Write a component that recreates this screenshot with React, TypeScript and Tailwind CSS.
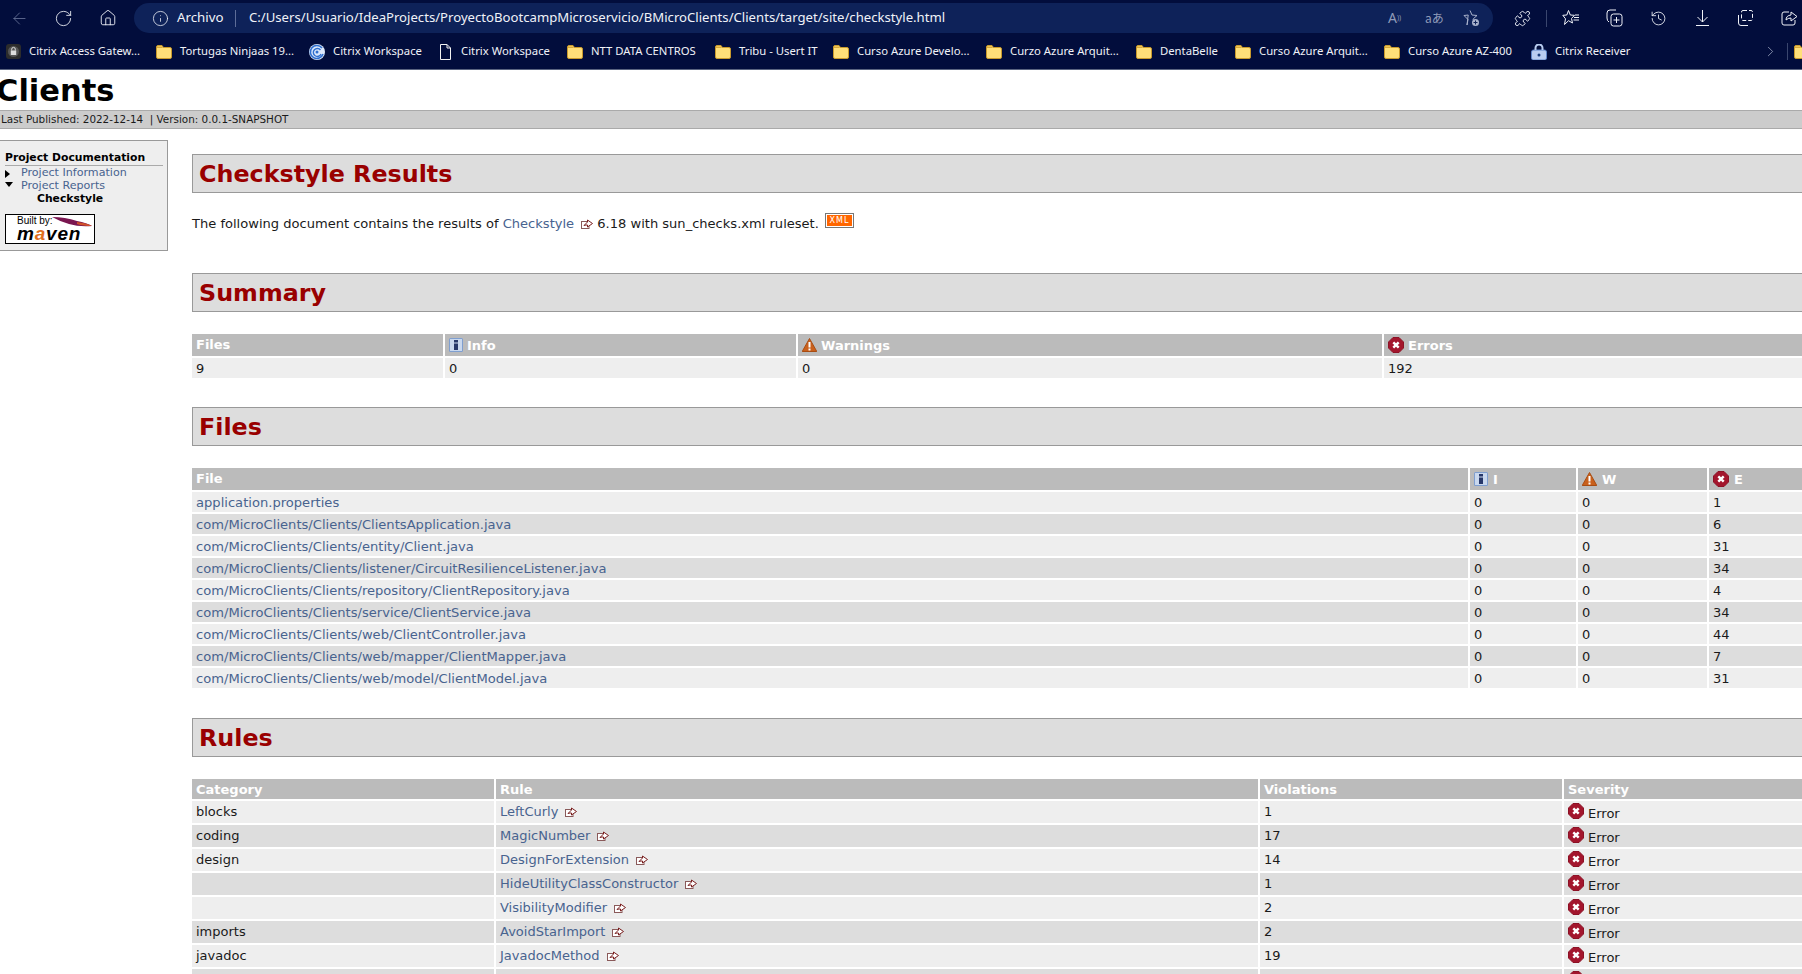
import { ArrowLeft, ChevronRight, History, House, Info, Puzzle, RotateCw } from "lucide-react";
import type { ReactNode } from "react";

const bookmarks = [
  { label: "Citrix Access Gatew...", icon: "lock", width: "w-[150px]" },
  { label: "Tortugas Ninjaas 19...", icon: "folder", width: "w-[153px]" },
  { label: "Citrix Workspace", icon: "swirl", width: "w-[129px]" },
  { label: "Citrix Workspace", icon: "file", width: "w-[129px]" },
  { label: "NTT DATA CENTROS", icon: "folder", width: "w-[148px]" },
  { label: "Tribu - Usert IT", icon: "folder", width: "w-[118px]" },
  { label: "Curso Azure Develo...", icon: "folder", width: "w-[153px]" },
  { label: "Curzo Azure Arquit...", icon: "folder", width: "w-[150px]" },
  { label: "DentaBelle", icon: "folder", width: "w-[99px]" },
  { label: "Curso Azure Arquit...", icon: "folder", width: "w-[149px]" },
  { label: "Curso Azure AZ-400", icon: "folder", width: "w-[147px]" },
  { label: "Citrix Receiver", icon: "receiver", width: "w-[130px]" },
];

const files = [
  ["application.properties", "1"],
  ["com/MicroClients/Clients/ClientsApplication.java", "6"],
  ["com/MicroClients/Clients/entity/Client.java", "31"],
  ["com/MicroClients/Clients/listener/CircuitResilienceListener.java", "34"],
  ["com/MicroClients/Clients/repository/ClientRepository.java", "4"],
  ["com/MicroClients/Clients/service/ClientService.java", "34"],
  ["com/MicroClients/Clients/web/ClientController.java", "44"],
  ["com/MicroClients/Clients/web/mapper/ClientMapper.java", "7"],
  ["com/MicroClients/Clients/web/model/ClientModel.java", "31"],
];

const rules = [
  ["blocks", "LeftCurly", "1"],
  ["coding", "MagicNumber", "17"],
  ["design", "DesignForExtension", "14"],
  ["", "HideUtilityClassConstructor", "1"],
  ["", "VisibilityModifier", "2"],
  ["imports", "AvoidStarImport", "2"],
  ["javadoc", "JavadocMethod", "19"],
  ["", "", ""],
];

function Folder() {
  return (
    <svg width="16" height="14" viewBox="0 0 16 14" className="shrink-0">
      <path d="M0.5 2 Q0.5 0.5 2 0.5 H6 L7.5 2.5 H14 Q15.5 2.5 15.5 4 V12 Q15.5 13.5 14 13.5 H2 Q0.5 13.5 0.5 12 Z" fill="#ffdf79" stroke="#c99a2c" />
      <path d="M1 1.5 H6 L7 3 H1 Z" fill="#d9a93a" />
    </svg>
  );
}

function BookmarkIcon({ type }: { type: string }) {
  if (type === "folder") return <Folder />;
  if (type === "lock")
    return (
      <svg width="15" height="15" viewBox="0 0 15 15" className="shrink-0">
        <rect width="15" height="15" rx="3" fill="#2c2c2c" />
        <circle cx="7.5" cy="7.5" r="5.5" fill="#555" />
        <rect x="4.8" y="6.5" width="5.4" height="4.5" fill="#ddd" />
        <path d="M5.7 6.5 V5.2 A1.8 1.8 0 0 1 9.3 5.2 V6.5" fill="none" stroke="#ddd" />
      </svg>
    );
  if (type === "swirl")
    return (
      <svg width="16" height="16" viewBox="0 0 16 16" className="shrink-0">
        <circle cx="8" cy="8" r="8" fill="#dbe8fb" />
        <path d="M13 4 A6.5 6.5 0 1 0 14 10" fill="none" stroke="#2f6fd0" strokeWidth="1.6" />
        <path d="M11.5 6 A4 4 0 1 0 12 10" fill="none" stroke="#2f6fd0" strokeWidth="1.4" />
        <circle cx="8" cy="8" r="1.5" fill="#2f6fd0" />
      </svg>
    );
  if (type === "file")
    return (
      <svg width="13" height="16" viewBox="0 0 13 16" className="shrink-0 ml-[1px] mr-[1px]">
        <path d="M1.5 0.5 H8 L11.5 4 V15.5 H1.5 Z M8 0.5 V4 H11.5" fill="none" stroke="#f2f2f2" />
      </svg>
    );
  return (
    <svg width="16" height="16" viewBox="0 0 16 16" className="shrink-0">
      <rect x="0.5" y="6" width="15" height="10" rx="2" fill="#b9cdf0" stroke="#5f86c8" />
      <path d="M4.5 6 V4 A3.5 3.5 0 0 1 11.5 4 V6" fill="none" stroke="#b9cdf0" strokeWidth="2" />
      <circle cx="8" cy="11" r="1.5" fill="#1c3f7d" />
    </svg>
  );
}

function ErrorIcon() {
  return (
    <svg width="16" height="16" viewBox="0 0 16 16" className="relative -top-[1px] inline-block shrink-0">
      <path d="M5 0.5 H11 L15.5 5 V11 L11 15.5 H5 L0.5 11 V5 Z" fill="#a3162d" stroke="#8c1226" strokeLinejoin="round" />
      <path d="M5.3 5.3 L10.7 10.7 M10.7 5.3 L5.3 10.7" stroke="#fff" strokeWidth="2.4" />
    </svg>
  );
}

function InfoIcon() {
  return (
    <svg width="14" height="14" viewBox="0 0 14 14" className="relative -top-[1px] inline-block shrink-0">
      <rect width="14" height="14" rx="1.5" fill="#7f9fd0" />
      <rect x="1" y="1" width="12" height="12" fill="#c9d8ee" />
      <rect x="5" y="2" width="4" height="10" fill="#27386a" />
      <rect x="5" y="4.5" width="4" height="1" fill="#c9d8ee" />
    </svg>
  );
}

function WarnIcon() {
  return (
    <svg width="15" height="14" viewBox="0 0 15 14" className="relative -top-[1px] inline-block shrink-0">
      <path d="M7.5 0.5 L14.8 13.5 H0.2 Z" fill="#c9601c" stroke="#a84c12" strokeLinejoin="round" />
      <rect x="6.5" y="4" width="2" height="5.5" fill="#fff" />
      <rect x="6.5" y="10.5" width="2" height="2" fill="#fff" />
    </svg>
  );
}

function ExternalLink() {
  return (
    <svg width="12" height="10" viewBox="0 0 12 10" className="inline-block ml-[7px] align-[-1px]">
      <rect x="0.5" y="2.5" width="7.5" height="7" fill="#fff" stroke="#8a5a5a" />
      <path d="M3 6.5 L6.5 3 V1 L11.5 4.5 L6.5 8 V6 H5 Z" fill="#fff" stroke="#7a1f1f" />
    </svg>
  );
}

function Section({ children }: { children: ReactNode }) {
  return (
    <h2 className="ml-[2px] w-[1640px] h-[39px] pl-[6px] pt-[2px] flex items-center bg-[#ddd] border border-[#999] text-[#900] text-[23.8px] font-bold leading-none">
      {children}
    </h2>
  );
}

function FileLink({ children }: { children: ReactNode }) {
  return <a className="text-[#48638f]">{children}</a>;
}

export default function App() {
  return (
    <div className="w-[1802px] h-[974px] overflow-hidden bg-white text-[13px] text-[#1a1a1a] font-['DejaVu_Sans',sans-serif]">
      {/* browser chrome */}
      <div className="h-[70px] bg-[#020d3c] border-b border-[#5a6480] text-[#f0f2f8] font-['Noto_Sans',sans-serif]">
        <div className="h-[36px] flex items-center">
          <ArrowLeft size={19} strokeWidth={1} className="ml-[10px] text-[#6f7a9e]" />
          <RotateCw size={19} strokeWidth={1.1} className="ml-[25px]" />
          <House size={18} strokeWidth={1.2} className="ml-[26px]" />
          <div className="ml-[17px] w-[1359px] h-[30px] rounded-full bg-[#0e2259] flex items-center text-[13.3px]">
            <Info size={17} strokeWidth={1.1} className="ml-[18px]" />
            <span className="ml-[8px] w-[58px]">Archivo</span>
            <span className="w-px h-[17px] bg-[#5e6d98]" />
            <span className="ml-[13px] text-[13.15px] whitespace-nowrap">
              C:/Users/Usuario/IdeaProjects/ProyectoBootcampMicroservicio/BMicroClients/Clients/target/site/checkstyle.html
            </span>
            <div className="ml-auto mr-[13px] flex items-center gap-[17px] text-[#8f9ab8]">
              <span className="text-[14px] w-[20px] leading-none whitespace-nowrap">
                A<sup className="text-[7px]">))</sup>
              </span>
              <span className="text-[12px] w-[20px] leading-none whitespace-nowrap font-['Noto_Sans_CJK_JP',sans-serif]">aあ</span>
              <svg width="18" height="18" viewBox="0 0 18 18" fill="none" stroke="#a9b2cc">
                <path d="M8 1.5 L10 6 L15 6.5 L11.3 9.8 L11 11 M5 16 L6 10.5 L2 6.5 L6.2 6 Z" />
                <circle cx="13.5" cy="13.5" r="3.5" fill="#a9b2cc" stroke="none" />
                <path d="M13.5 11.5 V15.5 M11.5 13.5 H15.5" stroke="#0e2259" />
              </svg>
            </div>
          </div>
          <Puzzle size={17} strokeWidth={1.3} className="ml-[21px]" />
          <span className="ml-[15px] w-px h-[17px] bg-[#3a466e]" />
          <svg width="18" height="18" viewBox="0 0 18 18" fill="none" stroke="#f0f2f8" className="ml-[15px]">
            <path d="M6.5 1.5 L8.3 6 L12.5 6.3 L9.5 9.5 L10.5 14 L6.5 11.7 L2.5 15.5 L3.5 9.8 L0.8 6.3 L4.8 6 Z M12 8.5 H17 M11.5 11 H17 M13 6 H17" />
          </svg>
          <svg width="17" height="18" viewBox="0 0 17 18" fill="none" stroke="#f0f2f8" className="ml-[26px]">
            <path d="M3 13 Q1 12 1 9 V4 Q1 1 4 1 H10" />
            <rect x="5" y="5" width="11" height="12" rx="2.5" />
            <path d="M10.5 8 V14 M7.5 11 H13.5" />
          </svg>
          <History size={17} strokeWidth={1.2} className="ml-[27px]" />
          <svg width="17" height="18" viewBox="0 0 17 18" fill="none" stroke="#f0f2f8" className="ml-[27px]">
            <path d="M8.5 1 V13 M3.5 8 L8.5 13 L13.5 8 M2 16.5 H15" />
          </svg>
          <svg width="17" height="18" viewBox="0 0 17 18" fill="none" stroke="#f0f2f8" className="ml-[26px]">
            <path d="M6 1.5 H14 Q15.5 1.5 15.5 3 V10 Q15.5 11.5 14 11.5 H6 Q4.5 11.5 4.5 10 V3 Q4.5 1.5 6 1.5 Z" strokeDasharray="4 2" />
            <path d="M1.5 6 V14 Q1.5 16.5 4 16.5 H11" />
          </svg>
          <svg width="17" height="18" viewBox="0 0 17 18" fill="none" stroke="#f0f2f8" className="ml-[27px]">
            <path d="M8 3 H3 Q1 3 1 5 V14 Q1 16 3 16 H12 Q14 16 14 14 V11" />
            <path d="M5 11 Q5 6.5 10 6 V3 L16 7.5 L10 12 V9 Q7 9 5 11 Z" />
          </svg>
        </div>
        <div className="h-[33px] pl-[6px] pb-[2px] flex items-center text-[11.3px]">
          {bookmarks.map((b, i) => (
            <div key={i} className={`${b.width} shrink-0 flex items-center gap-[8px] whitespace-nowrap`}>
              <BookmarkIcon type={b.icon} />
              <span>{b.label}</span>
            </div>
          ))}
          <ChevronRight size={17} strokeWidth={1} className="ml-[101px] shrink-0 text-[#b0b8d0]" />
          <span className="ml-[8px] w-px h-[17px] bg-[#3a466e] shrink-0" />
          <div className="ml-[6px] shrink-0">
            <Folder />
          </div>
        </div>
      </div>

      {/* banner */}
      <div className="h-[40px] pt-[2px] flex items-center">
        <h1 className="-ml-[4px] text-[30.5px] font-bold text-black leading-none">Clients</h1>
      </div>
      <div className="h-[19px] pl-[1px] pt-px flex items-center bg-[#ccc] border-y border-[#aaa] text-[10.4px] whitespace-pre">
        Last Published: 2022-12-14  | Version: 0.0.1-SNAPSHOT
      </div>

      <div className="flex items-start">
        {/* left menu */}
        <div className="mt-[11px] w-[168px] h-[111px] shrink-0 bg-[#eee] border-y border-r border-[#999] pl-[5px] pr-[4px] pt-[10px] text-[11.1px] leading-[13px]">
          <h5 className="text-[10.8px] font-bold text-black border-b border-[#aaa] leading-[13px] pb-[1px] whitespace-nowrap">
            Project Documentation
          </h5>
          <div className="relative pl-[16px] text-[#48638f]">
            <span className="absolute left-0 top-[4px] w-0 h-0 border-y-[4px] border-y-transparent border-l-[5px] border-l-black" />
            Project Information
          </div>
          <div className="relative pl-[16px] text-[#48638f]">
            <span className="absolute left-0 top-[3px] w-0 h-0 border-x-[4px] border-x-transparent border-t-[5px] border-t-black" />
            Project Reports
          </div>
          <div className="pl-[32px] text-[10.8px] font-bold text-black">Checkstyle</div>
          <div className="relative mt-[9px] w-[90px] h-[30px] bg-white border border-black font-['Liberation_Sans',sans-serif] text-black">
            <span className="absolute left-[11px] top-[1px] text-[10px] leading-[10px]">Built by:</span>
            <svg width="42" height="14" viewBox="0 0 42 14" className="absolute right-[1px] top-0">
              <path d="M1 2 Q14 2 26 6 Q36 8 41 11 Q28 12 18 9 Q8 6 1 2 Z" fill="#7a1650" />
              <path d="M26 7 Q36 8 41 11 Q32 11 26 9 Z" fill="#d0502a" />
            </svg>
            <span className="absolute left-[11px] top-[11px] text-[19px] leading-[16px] font-black italic tracking-[0.8px]">
              m<span className="text-[#e0701f]">a</span>ven
            </span>
          </div>
        </div>

        <div className="ml-[22px] pt-[25px]">
          <Section>Checkstyle Results</Section>
          <p className="ml-[2px] mt-[20px] mb-[40px] h-[20px] pt-[2px] text-[13.05px] flex items-center whitespace-pre">
            The following document contains the results of <FileLink>Checkstyle</FileLink>
            <ExternalLink /> 6.18 with sun_checks.xml ruleset.{" "}
            <span className="relative -top-[4px] ml-[2px] flex items-center justify-center w-[29px] h-[15px] border border-[#777] p-px">
              <span className="w-full h-full bg-[#f60] text-white text-[8px] tracking-[1px] leading-[11px] text-center">XML</span>
            </span>
          </p>

          <Section>Summary</Section>
          <table className="mt-[20px] table-fixed border-separate border-spacing-[2px] w-[1644px]">
            <thead>
              <tr className="h-[22px] bg-[#bbb] text-white text-left">
                <th className="w-[251px] px-[4px] font-bold">Files</th>
                <th className="w-[351px] px-[4px] font-bold"><span className="flex items-center gap-[4px] pt-[2px] leading-[18px]"><InfoIcon />Info</span></th>
                <th className="w-[584px] px-[4px] font-bold"><span className="flex items-center gap-[4px] pt-[2px] leading-[18px]"><WarnIcon />Warnings</span></th>
                <th className="px-[4px] font-bold"><span className="flex items-center gap-[4px] pt-[2px] leading-[18px]"><ErrorIcon />Errors</span></th>
              </tr>
            </thead>
            <tbody>
              <tr className="h-[20px] bg-[#eee] leading-[18px]">
                <td className="px-[4px] pt-[2px]">9</td>
                <td className="px-[4px] pt-[2px]">0</td>
                <td className="px-[4px] pt-[2px]">0</td>
                <td className="px-[4px] pt-[2px]">192</td>
              </tr>
            </tbody>
          </table>

          <div className="mt-[27px]">
            <Section>Files</Section>
          </div>
          <table className="mt-[20px] table-fixed border-separate border-spacing-[2px] w-[1644px]">
            <thead>
              <tr className="h-[22px] bg-[#bbb] text-white text-left">
                <th className="w-[1276px] px-[4px] font-bold">File</th>
                <th className="w-[106px] px-[4px] font-bold"><span className="flex items-center gap-[5px] pt-[2px] leading-[18px]"><InfoIcon />I</span></th>
                <th className="w-[129px] px-[4px] font-bold"><span className="flex items-center gap-[5px] pt-[2px] leading-[18px]"><WarnIcon />W</span></th>
                <th className="px-[4px] font-bold"><span className="flex items-center gap-[5px] pt-[2px] leading-[18px]"><ErrorIcon />E</span></th>
              </tr>
            </thead>
            <tbody>
              {files.map(([name, errors], i) => (
                <tr key={name} className={i % 2 === 0 ? "h-[20px] bg-[#eee] leading-[18px]" : "h-[20px] bg-[#ddd] leading-[18px]"}>
                  <td className="px-[4px] pt-[2px] text-[13.1px]"><FileLink>{name}</FileLink></td>
                  <td className="px-[4px] pt-[2px]">0</td>
                  <td className="px-[4px] pt-[2px]">0</td>
                  <td className="px-[4px] pt-[2px]">{errors}</td>
                </tr>
              ))}
            </tbody>
          </table>

          <div className="mt-[28px]">
            <Section>Rules</Section>
          </div>
          <table className="mt-[20px] table-fixed border-separate border-spacing-[2px] w-[1644px]">
            <thead>
              <tr className="h-[20px] bg-[#bbb] text-white text-left leading-[18px]">
                <th className="w-[302px] px-[4px] pt-[2px] font-bold">Category</th>
                <th className="w-[762px] px-[4px] pt-[2px] font-bold">Rule</th>
                <th className="w-[302px] px-[4px] pt-[2px] font-bold">Violations</th>
                <th className="px-[4px] pt-[2px] font-bold">Severity</th>
              </tr>
            </thead>
            <tbody>
              {rules.map(([category, rule, count], i) => (
                <tr key={i} className={i % 2 === 0 ? "h-[22px] bg-[#eee]" : "h-[22px] bg-[#ddd]"}>
                  <td className="px-[4px]">{category}</td>
                  <td className="px-[4px]">
                    {rule && (
                      <>
                        <FileLink>{rule}</FileLink>
                        <ExternalLink />
                      </>
                    )}
                  </td>
                  <td className="px-[4px]">{count}</td>
                  <td className="px-[4px]">
                    <span className="flex items-center gap-[4px]">
                      <ErrorIcon />
                      <span className="relative top-[2px]">Error</span>
                    </span>
                  </td>
                </tr>
              ))}
            </tbody>
          </table>
        </div>
      </div>
    </div>
  );
}
